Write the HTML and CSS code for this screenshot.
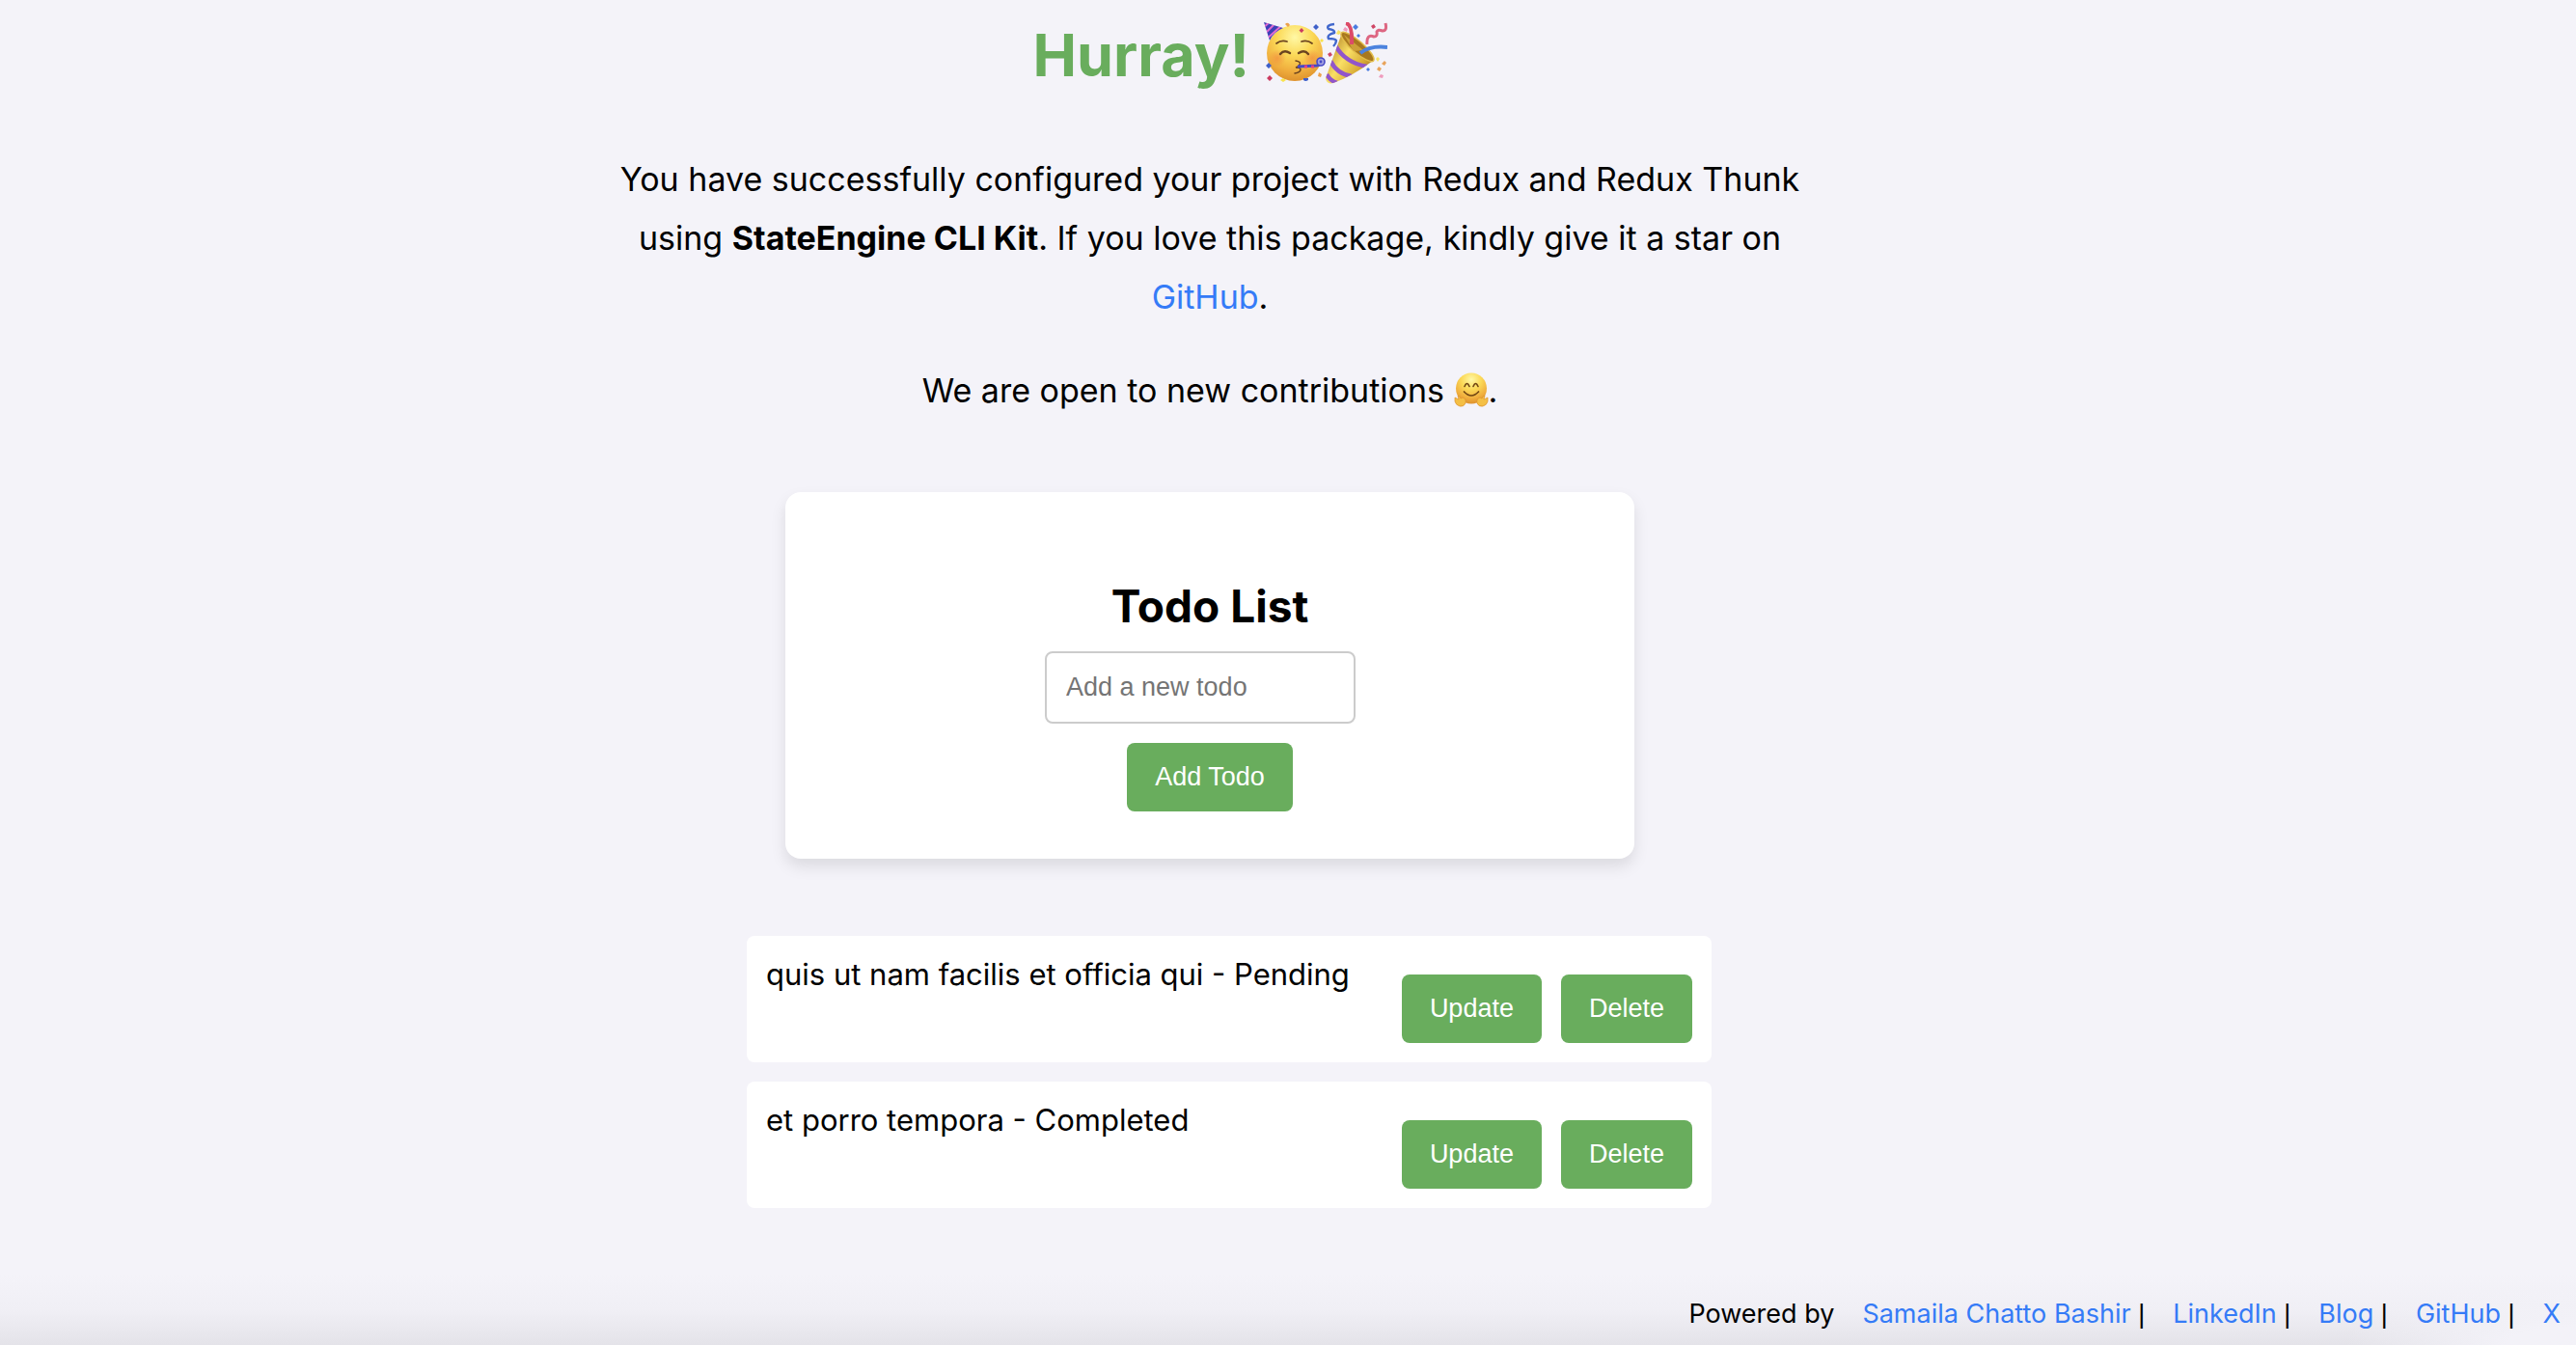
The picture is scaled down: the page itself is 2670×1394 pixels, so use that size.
FILE: index.html
```html
<!DOCTYPE html>
<html lang="en">
<head>
<meta charset="utf-8">
<meta name="viewport" content="width=device-width, initial-scale=1">
<title>StateEngine CLI Kit</title>
<link rel="stylesheet" href="styles.css">
</head>
<body>
<main class="app">
  <h1 class="title">Hurray! <svg class="emoji emoji-large" viewBox="0 0 64 64" role="img" aria-label="Partying face">
      <defs>
        <radialGradient id="face" cx="50%" cy="22%" r="80%"><stop offset="0" stop-color="#fff8a6"/><stop offset=".4" stop-color="#fbd957"/><stop offset=".75" stop-color="#f0ae3e"/><stop offset="1" stop-color="#dc8f2c"/></radialGradient>
        <radialGradient id="blush"><stop offset="0" stop-color="#f0783a" stop-opacity=".5"/><stop offset="1" stop-color="#f0783a" stop-opacity="0"/></radialGradient>
        <clipPath id="hat"><path d="M0 0L20 6Q10 10 6 19Z"/></clipPath>
      </defs>
      <circle cx="32" cy="32" r="29" fill="url(#face)"/>
      <circle cx="14" cy="37" r="9" fill="url(#blush)"/><circle cx="50" cy="37" r="9" fill="url(#blush)"/>
      <g clip-path="url(#hat)"><path d="M0 0h22v22H0z" fill="#3d3fb8"/><path d="M-2 7L8-2M0 13L14-1M1 19L20 2" stroke="#e06bd0" stroke-width="2"/></g>
      <g fill="none" stroke="#6b4420" stroke-linecap="round" stroke-width="1.8"><path d="M13 22q5-4 11-2M39 20q6-2 11 2"/><path d="M17 33q4-5 10-1M36 32q6-4 10 1" stroke-width="2.4"/><path d="M33 40q6 1 4 4-1 2-4 3 5 0 5 2 0 3-6 4" stroke-width="1.5"/></g>
      <path d="M35 46l20-1q4-1 4-4" fill="none" stroke="#4649c7" stroke-width="3"/><path d="M42 46h3M49 46h3" stroke="#e33f86" stroke-width="3"/>
      <circle cx="59" cy="41" r="4" fill="#a2a0df" stroke="#4649c7" stroke-width="1.6"/><circle cx="59" cy="41" r="1.4" fill="#4649c7"/>
      <path d="M39 6l2.500 2.500L39 11l-2.500-2.500zM6 55l3 3-3 3-3-3z" fill="#cb3b61"/>
      <path d="M54 2l3 3-3 3-3-3zM5 42l3 3-3 3-3-3zM41 58h5v2q-3 2-5 0z" fill="#3e5fc9"/>
      <path d="M60 17l2 2-2 2-2-2zM17 60l3-2 3 2-3 2z" fill="#f9e34d"/><path d="M22 2q3-3 5 1l-2 2zM57 52l3 2-1 3-3-1z" fill="#eca24c"/>
    </svg><svg class="emoji emoji-large" viewBox="0 0 64 64" role="img" aria-label="Party popper">
      <defs>
        <linearGradient id="cone" x1="0" y1=".2" x2="1" y2=".9"><stop offset="0" stop-color="#ad7b20"/><stop offset=".4" stop-color="#f9df65"/><stop offset=".7" stop-color="#d9ac35"/><stop offset="1" stop-color="#96661a"/></linearGradient>
        <clipPath id="coneShape"><path d="M17 11L49 40Q26 57 8 63Q1 65 0 58Z"/></clipPath>
      </defs>
      <path d="M17 11L49 40Q26 57 8 63Q1 65 0 58Z" fill="url(#cone)"/>
      <g clip-path="url(#coneShape)" fill="none" stroke="#9155cb" stroke-width="4.500"><path d="M10 24Q20 42 43 46"/><path d="M5 40q7 14 22 16"/><path d="M1 54q4 7 11 9"/></g>
      <ellipse cx="33" cy="25.500" rx="22" ry="6" transform="rotate(41 33 25.500)" fill="#a8781f" stroke="#e3be4c" stroke-width="1.500"/>
      <path d="M19 13l20 16-10 1z" fill="#cda038"/>
      <path d="M21 1q7 1 6 22" fill="none" stroke="#dc4b68" stroke-width="4"/>
      <path d="M36 32q10-8 28-6" fill="none" stroke="#4c83de" stroke-width="4"/>
      <path d="M9 2q-9 1-6 5 7 1 6 4-8 2-6 6 7 0 8 2 0 3-3 6" fill="none" stroke="#4167cc" stroke-width="2.400"/>
      <path d="M62 1q2 8-3 8-5-2-6 1 1 5-3 5-8-3-7 8" fill="none" stroke="#dd6682" stroke-width="3"/>
      <path d="M31 2l3 3-3 3-3-3zM34 12l2 2-2 2-2-2zM44 47l2 2-2 2-2-2z" fill="#4a7ce0"/>
      <path d="M50 2l2 3-3 2-2-3zM5 31l2 3-3 2-2-3z" fill="#cf4565"/><path d="M13 8l3 2-2 3-3-1zM54 36l2 2-2 3-2-3z" fill="#f7e465"/><path d="M20 5l3 2-1 3-4-2zM57 54l3 1-1 3-4-1z" fill="#ef9bbd"/><path d="M61 40l2 2-2 3-3-2zM55 46l3 2-2 3-3-2z" fill="#e8a35a"/>
    </svg></h1>
  <section class="intro">
    <p>You have successfully configured your project with Redux and Redux Thunk using <strong>StateEngine CLI Kit</strong>. If you love this package, kindly give it a star on <a href="#github">GitHub</a>.</p>
    <p>We are open to new contributions <svg class="emoji" viewBox="0 0 36 36" role="img" aria-label="Hugging face">
      <circle cx="18" cy="16.500" r="16" fill="url(#face)"/>
      <g fill="none" stroke="#704512" stroke-linecap="round"><path d="M11 14.500q2.500-6 5 0M20 14.500q2.500-6 5 0" stroke-width="1.600"/><path d="M10.500 20q7.500 8 15 0" stroke-width="1.700"/></g>
      <g fill="#f4bf45" stroke="#dd902e" stroke-width=".7"><path d="M1 26l4 2-1-4q2 0 3 3l2-1q4 1 3 6-2 4-6 3-4-1-5-5z"/><path d="M35 26l-4 2 1-4q-2 0-3 3l-2-1q-4 1-3 6 2 4 6 3 4-1 5-5z"/></g>
    </svg>.</p>
  </section>
  <form class="card">
    <h2 class="card-title">Todo List</h2>
    <input class="field" type="text" placeholder="Add a new todo" aria-label="Add a new todo">
    <button class="button" type="button">Add Todo</button>
  </form>
  <ul class="todos">
    <li class="todo">
      <span>quis ut nam facilis et officia qui - Pending</span>
      <div class="actions"><button class="button" type="button">Update</button><button class="button" type="button">Delete</button></div>
    </li>
    <li class="todo">
      <span>et porro tempora - Completed</span>
      <div class="actions"><button class="button" type="button">Update</button><button class="button" type="button">Delete</button></div>
    </li>
  </ul>
</main>
<footer class="footer">
  <span>Powered by</span>
  <span><a href="#author">Samaila Chatto Bashir</a> <span class="bar">|</span></span>
  <span><a href="#linkedin">LinkedIn</a> <span class="bar">|</span></span>
  <span><a href="#blog">Blog</a> <span class="bar">|</span></span>
  <span><a href="#github">GitHub</a> <span class="bar">|</span></span>
  <a href="#x">X</a>
</footer>
</body>
</html>
```
FILE: styles.css
```css
* {
  box-sizing: border-box;
}

body {
  display: flex;
  flex-direction: column;
  min-height: 100vh;
  margin: 0;
  background: #f4f3f9;
  color: #000;
  font-family: Inter, "Liberation Sans", sans-serif;
}

a {
  color: #357bf7;
  text-decoration: none;
}

.app {
  display: flex;
  flex-direction: column;
  align-items: center;
  padding: 19px 162px 0 0;
}

.title {
  margin: 0 0 60px;
  color: #69ad5d;
  font-size: 61px;
  line-height: 76px;
}

.emoji {
  width: 36px;
  height: 36px;
  vertical-align: -5px;
}

.emoji-large {
  width: 64px;
  height: 64px;
  vertical-align: -8px;
}

.intro {
  max-width: 1240px;
  font-size: 34px;
  line-height: 61px;
  text-align: center;
}

.intro p {
  margin: 0 0 36px;
}

.card {
  display: flex;
  flex-direction: column;
  align-items: center;
  width: 880px;
  max-width: 100%;
  margin-top: 39px;
  padding: 90px 40px 49px;
  border-radius: 16px;
  background: #fff;
  box-shadow: 0 8px 16px rgba(0, 0, 0, 0.1);
}

.card-title {
  margin: 0 0 18px;
  font-size: 46px;
  line-height: 57px;
}

.field,
.button {
  border-radius: 8px;
  font-family: "Liberation Sans", Arial, sans-serif;
  font-size: 27px;
  line-height: 31px;
}

.field {
  width: 322px;
  height: 75px;
  margin: 0 20px 20px 0;
  padding: 20px;
  border: 2px solid #ccc;
  background: #fff;
}

.field::placeholder {
  color: #757575;
}

.button {
  padding: 20px 29px;
  border: 0;
  background: #69ad5d;
  color: #fff;
}

.todos {
  display: flex;
  flex-direction: column;
  gap: 20px;
  width: 1040px;
  max-width: 100%;
  margin: 80px 0 0;
  padding: 0 0 0 40px;
  list-style: none;
}

.todo {
  display: flex;
  justify-content: space-between;
  padding: 20px;
  border-radius: 8px;
  background: #fff;
  font-size: 31px;
  line-height: 40px;
}

.actions {
  display: flex;
  gap: 20px;
  margin-top: 20px;
}

.footer {
  display: flex;
  justify-content: flex-end;
  gap: 29px;
  margin-top: auto;
  padding: 24px 16px 15px;
  background:
    radial-gradient(ellipse 240px 64px at 100% 100%, #f3f2f8 30%, rgba(243, 242, 248, 0)),
    linear-gradient(#f4f3f9, #f0eff5 50%, #e4e3e9);
  font-size: 27px;
  line-height: 34px;
}

.bar {
  font-family: "Liberation Sans", Arial, sans-serif;
}
```
